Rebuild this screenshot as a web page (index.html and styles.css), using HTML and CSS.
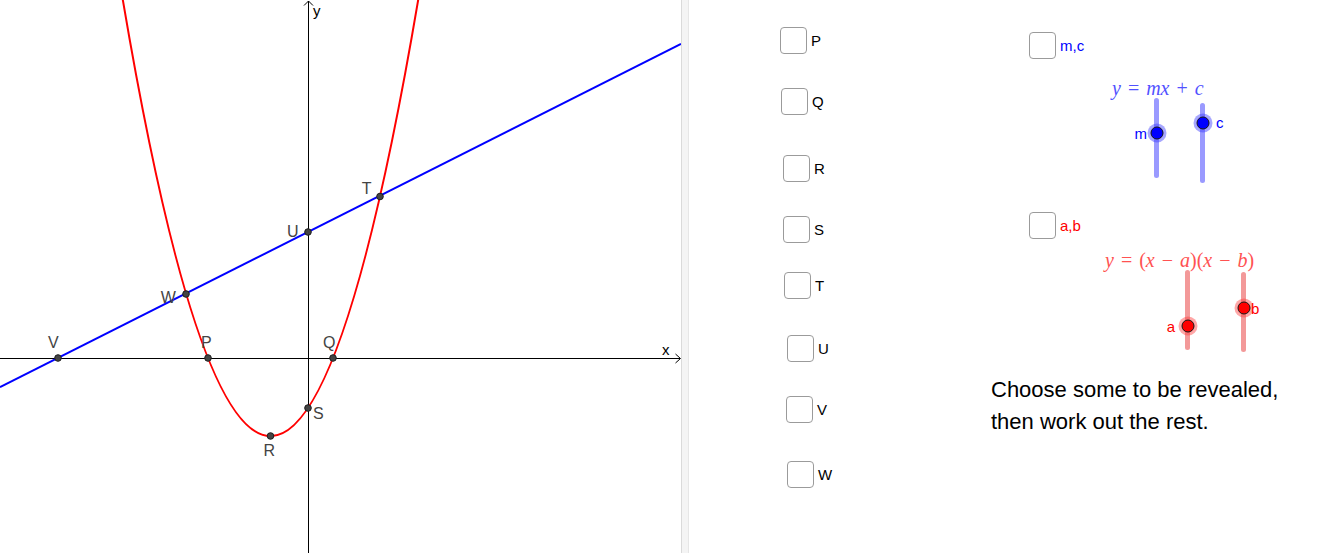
FILE: index.html
```html
<!DOCTYPE html>
<html lang="en">
<head>
<meta charset="utf-8">
<title>Line and parabola</title>
<link rel="stylesheet" href="styles.css">
</head>
<body>
<div class="app">
  <div class="graph">
    <svg class="plot" width="681" height="553" viewBox="0 0 681 553" xmlns="http://www.w3.org/2000/svg">
      <g class="axes" stroke="#000" stroke-width="1" fill="none">
        <line x1="0" y1="358.5" x2="680" y2="358.5"/>
        <polyline points="675.5,354 680.5,358.5 675.5,363"/>
        <line x1="308.5" y1="1" x2="308.5" y2="553"/>
        <polyline points="304,5.5 308.5,1 313,5.5"/>
      </g>
      <text class="axis-label" x="662" y="354.5">x</text>
      <text class="axis-label" x="313" y="16">y</text>
      <path d="M120,-16.88 Q270.5,889.13 421,-16.88" fill="none" stroke="#ff0000" stroke-width="2"/>
      <line x1="0" y1="387.2" x2="681" y2="44" stroke="#0000ff" stroke-width="2"/>
      <g class="pts" fill="#444" stroke="#1e1e1e" stroke-width="1">
        <circle cx="58" cy="358" r="3.3"/>
        <circle cx="208" cy="358" r="3.3"/>
        <circle cx="333" cy="358" r="3.3"/>
        <circle cx="308" cy="408" r="3.3"/>
        <circle cx="270.5" cy="436" r="3.3"/>
        <circle cx="186" cy="294" r="3.3"/>
        <circle cx="308" cy="232" r="3.3"/>
        <circle cx="380" cy="196.5" r="3.3"/>
      </g>
      <g class="pt-label">
        <text x="292.7" y="236.5">U</text>
        <text x="366.7" y="193.8">T</text>
        <text x="168.3" y="302.5">W</text>
        <text x="53.3" y="347.5">V</text>
        <text x="206.3" y="347.5">P</text>
        <text x="329.3" y="348">Q</text>
        <text x="318.3" y="419">S</text>
        <text x="269.3" y="455.8">R</text>
      </g>
    </svg>
  </div>
  <div class="splitter"></div>
  <div class="panel">
    <div class="col-points">
      <label class="cb"><span class="box"></span><span class="cb-text">P</span></label>
      <label class="cb"><span class="box"></span><span class="cb-text">Q</span></label>
      <label class="cb"><span class="box"></span><span class="cb-text">R</span></label>
      <label class="cb"><span class="box"></span><span class="cb-text">S</span></label>
      <label class="cb"><span class="box"></span><span class="cb-text">T</span></label>
      <label class="cb"><span class="box"></span><span class="cb-text">U</span></label>
      <label class="cb"><span class="box"></span><span class="cb-text">V</span></label>
      <label class="cb"><span class="box"></span><span class="cb-text">W</span></label>
    </div>
    <div class="col-controls">
      <label class="cb cb-group cb-blue"><span class="box"></span><span class="cb-text">m,c</span></label>
      <div class="formula formula-line"><i>y</i> = <i>mx</i> + <i>c</i></div>
      <div class="sliders sliders-line">
        <div class="slider slider-blue"><span class="knob" style="top:43.75%"><span class="knob-label kl-m">m</span></span></div>
        <div class="slider slider-blue"><span class="knob" style="top:25%"><span class="knob-label kl-c">c</span></span></div>
      </div>
      <label class="cb cb-group cb-red"><span class="box"></span><span class="cb-text">a,b</span></label>
      <div class="formula formula-quad"><i>y</i> = (<i>x</i> − <i>a</i>)(<i>x</i> − <i>b</i>)</div>
      <div class="sliders sliders-quad">
        <div class="slider slider-red"><span class="knob" style="top:70%"><span class="knob-label kl-a">a</span></span></div>
        <div class="slider slider-red"><span class="knob" style="top:45%"><span class="knob-label kl-b">b</span></span></div>
      </div>
      <p class="note">Choose some to be revealed,<br>then work out the rest.</p>
    </div>
  </div>
</div>
</body>
</html>
```

FILE: styles.css
```css
html, body {
  margin: 0;
  padding: 0;
  background: #ffffff;
}

body {
  font-family: "Liberation Sans", Arial, sans-serif;
  color: #000;
  overflow: hidden;
}

.app {
  display: flex;
  width: 1336px;
  height: 553px;
}

.graph {
  width: 681px;
  height: 553px;
  flex: none;
}

.plot {
  display: block;
}

.axis-label {
  font-family: "Liberation Sans", Arial, sans-serif;
  font-size: 15px;
  fill: #000;
}

.pt-label text {
  font-family: "Liberation Sans", Arial, sans-serif;
  font-size: 16px;
  fill: #444;
  text-anchor: middle;
}

.splitter {
  width: 8px;
  flex: none;
  box-sizing: border-box;
  background: #f4f4f4;
  border-left: 1px solid #dadada;
  border-right: 1px solid #e6e6e6;
}

.panel {
  flex: 1;
  display: grid;
  grid-template-columns: 211px 1fr;
  padding-left: 91px;
}

/* checkboxes */
.cb {
  display: flex;
  align-items: center;
  height: 27px;
  gap: 4px;
  font-size: 15px;
}

.box {
  width: 27px;
  height: 27px;
  box-sizing: border-box;
  border: 1.5px solid #9b9b9b;
  border-radius: 4px;
  background: #fff;
  flex: none;
}

.col-points {
  display: flex;
  flex-direction: column;
  align-items: flex-start;
  padding-top: 27px;
}

.col-points .cb:nth-child(2) { margin-top: 34px; margin-left: 1px; }
.col-points .cb:nth-child(3) { margin-top: 40px; margin-left: 3px; }
.col-points .cb:nth-child(4) { margin-top: 34px; margin-left: 3px; }
.col-points .cb:nth-child(5) { margin-top: 29px; margin-left: 4px; }
.col-points .cb:nth-child(6) { margin-top: 36px; margin-left: 7px; }
.col-points .cb:nth-child(7) { margin-top: 34px; margin-left: 6px; }
.col-points .cb:nth-child(8) { margin-top: 38px; margin-left: 7px; }

.col-controls {
  display: flex;
  flex-direction: column;
  align-items: flex-start;
  padding-top: 32px;
}

.cb-group {
  margin-left: 38px;
}

.cb-blue .cb-text { color: #0000ff; }
.cb-red .cb-text { color: #ff0000; }

.cb-red { margin-top: 29px; }

/* formulas */
.formula {
  font-family: "Liberation Serif", "Times New Roman", serif;
  font-size: 20px;
  line-height: 20px;
  height: 20px;
  word-spacing: 2px;
  white-space: nowrap;
}

.formula-line {
  color: #5252ff;
  margin-top: 19px;
  margin-left: 121px;
}

.formula-quad {
  color: #ff5252;
  margin-top: 11px;
  margin-left: 114px;
}

/* sliders */
.sliders {
  display: flex;
  align-items: flex-start;
}

.sliders-line { height: 85px; }
.sliders-quad { height: 82px; }

.slider {
  position: relative;
  width: 5px;
  height: 80px;
  border-radius: 3px;
  flex: none;
}

.slider-blue { background: #9a9aff; }
.slider-red { background: #f39999; }

.sliders-line .slider:first-child { margin-left: 163px; }
.sliders-line .slider:last-child { margin-left: 41px; margin-top: 5px; }
.sliders-quad .slider:first-child { margin-left: 194px; }
.sliders-quad .slider:last-child { margin-left: 51px; margin-top: 2px; }

.knob {
  position: absolute;
  left: 50%;
  width: 13px;
  height: 13px;
  box-sizing: border-box;
  border: 1px solid #151515;
  border-radius: 50%;
  transform: translate(-50%, -50%);
}

.slider-blue .knob {
  background: #0000ff;
  box-shadow: 0 0 0 3px rgba(60, 60, 255, 0.45);
}

.slider-red .knob {
  background: #ff0000;
  box-shadow: 0 0 0 3px rgba(255, 60, 60, 0.45);
}

.knob-label {
  position: absolute;
  top: 50%;
  transform: translateY(-50%);
  font-size: 15px;
  line-height: 16px;
}

.slider-blue .knob-label { color: #0000ff; }
.slider-red .knob-label { color: #ff0000; }

.kl-m { right: calc(100% + 4px); }
.kl-c { left: calc(100% + 8px); margin-top: -1px; }
.kl-a { right: calc(100% + 7px); }
.kl-b { left: calc(100% + 2px); }

.note {
  margin: 22px 0 0 0;
  font-size: 22px;
  line-height: 32px;
  white-space: nowrap;
}
```
